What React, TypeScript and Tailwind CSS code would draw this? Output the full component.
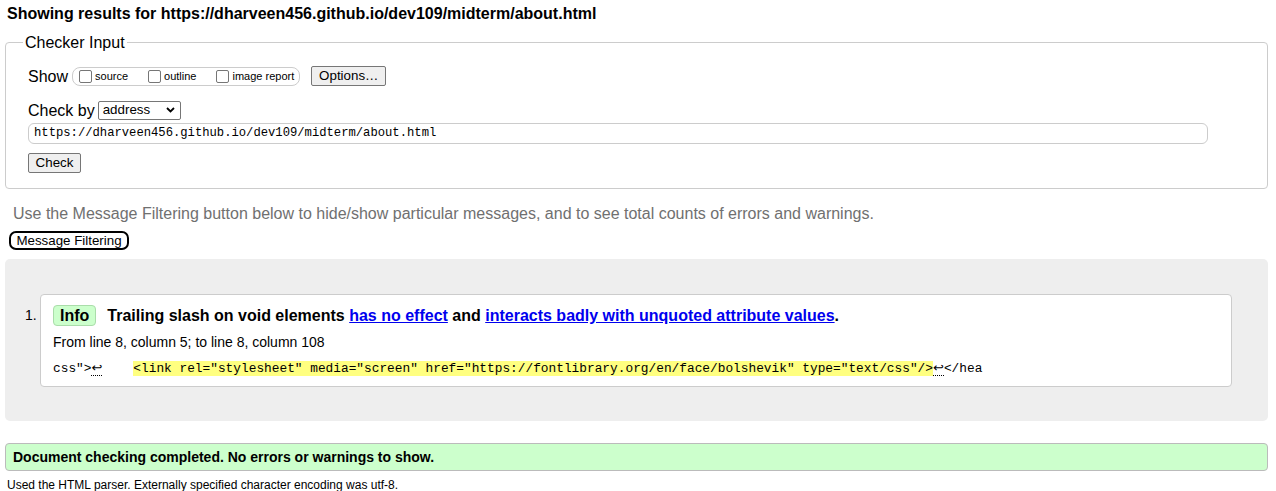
import React from "react";

function Box() {
  return <span className="inline-block w-[13px] h-[13px] border border-[#767676] rounded-[2px] bg-white shrink-0" />;
}

function LF() {
  return <span className="inline-block border-b border-dotted border-black leading-[14px] font-['DejaVu_Sans',sans-serif] text-[13px]">↩</span>;
}

export default function App() {
  const mono = "font-['Liberation_Mono','DejaVu_Sans_Mono',monospace]";
  return (
    <div className="font-['Liberation_Sans',Arial,sans-serif] text-black bg-white w-[1276px] h-[491px] overflow-hidden pl-[5px] pr-[8px]">
      <h2 className="pl-[2px] pt-[4px] pb-[10px] text-[16px] leading-[19px] font-bold">
        Showing results for https://dharveen456.github.io/dev109/midterm/about.html
      </h2>

      <fieldset className="m-0 p-0 border border-[#cccccc] rounded-[4px]">
        <legend className="ml-[17px] px-[2px] text-[16px] leading-[19px]">Checker Input</legend>
        <div className="pl-[22px] pt-[14px] pb-[15px]">
          <div className="flex items-center h-[20px]">
            <span className="text-[16px] leading-[19px]">Show</span>
            <span className="ml-[4px] flex items-center h-[19px] border border-[#cccccc] rounded-[8px] pl-[6px] pr-[5px] text-[11px] leading-[13px]">
              <span className="flex items-center gap-[3px]"><Box /><span>source</span></span>
              <span className="flex items-center gap-[3px] ml-[20px]"><Box /><span>outline</span></span>
              <span className="flex items-center gap-[3px] ml-[20px]"><Box /><span>image report</span></span>
            </span>
            <span className="ml-[11px] h-[20px] w-[75px] flex items-center justify-center bg-[#efefef] border border-[#767676] rounded-[2px] text-[13.333px]">
              Options…
            </span>
          </div>

          <div className="flex items-center h-[20px] mt-[14px]">
            <span className="text-[16px] leading-[19px]">Check by</span>
            <span className="ml-[3px] h-[19px] w-[83px] flex items-center justify-between border border-[#767676] rounded-[2px] pl-[4px] pr-[5px] text-[13.333px]">
              <span>address</span>
              <svg width="9" height="6" viewBox="0 0 9 6">
                <path d="M1 1 L4.5 4.5 L8 1" fill="none" stroke="#000" strokeWidth="1.8" />
              </svg>
            </span>
          </div>

          <div className={`mt-[3px] w-[1180px] h-[21px] border border-[#cccccc] rounded-[6px] flex items-center pl-[5px] text-[12.2px] ${mono}`}>
            https://dharveen456.github.io/dev109/midterm/about.html
          </div>

          <div className="mt-[9px] flex">
            <span className="h-[20px] w-[53px] flex items-center justify-center bg-[#efefef] border border-[#767676] rounded-[2px] text-[13.333px]">
              Check
            </span>
          </div>
        </div>
      </fieldset>

      <p className="ml-[8px] mt-[15px] text-[16px] leading-[19px] text-[#707070]">
        Use the Message Filtering button below to hide/show particular messages, and to see total counts of errors and warnings.
      </p>

      <div className="mt-[8px] flex pl-[4px]">
        <span className="h-[19px] w-[120px] flex items-center justify-center border-2 border-black rounded-[7px] text-[13.333px] leading-[15px]">
          Message Filtering
        </span>
      </div>

      <div className="mt-[9px] bg-[#eeeeee] rounded-[5px] pt-[35px] pb-[34px] pl-[20px] pr-[36px]">
        <div className="flex">
          <span className="w-[15px] pt-[13px] text-[14px] leading-[17px]">1.</span>
          <div className="flex-1 bg-white border border-[#cccccc] rounded-[4px] pl-[12px] pt-[10px] pb-[8px]">
            <div className="flex items-center h-[21px] text-[16px] leading-[19px] font-bold">
              <span className="h-[21px] px-[6px] flex items-center bg-[#ccffcc] border border-[#aaddaa] rounded-[4px]">Info</span>
              <span className="ml-[11px]">
                Trailing slash on void elements{" "}
                <a className="text-[#0000ee] underline">has no effect</a> and{" "}
                <a className="text-[#0000ee] underline">interacts badly with unquoted attribute values</a>.
              </span>
            </div>
            <div className="mt-[8px] text-[14px] leading-[17px]">From line 8, column 5; to line 8, column 108</div>
            <div className={`mt-[9px] text-[12.82px] leading-[18px] whitespace-pre ${mono}`}>
              <span>css"&gt;</span>
              <LF />
              <span className="inline-block w-[31px]"> </span>
              <span className="bg-[#ffff80]">{'<link rel="stylesheet" media="screen" href="https://fontlibrary.org/en/face/bolshevik" type="text/css"/>'}</span>
              <LF />
              <span>&lt;/hea</span>
            </div>
          </div>
        </div>
      </div>

      <div className="mt-[22px] h-[28px] bg-[#ccffcc] border border-[#bbbbbb] rounded-[4px] flex items-center pl-[7px] pt-[1px] text-[14px] font-bold">
        Document checking completed. No errors or warnings to show.
      </div>

      <p className="ml-[2px] mt-[7px] text-[12px] leading-[14px]">
        Used the HTML parser. Externally specified character encoding was utf-8.
      </p>
    </div>
  );
}
